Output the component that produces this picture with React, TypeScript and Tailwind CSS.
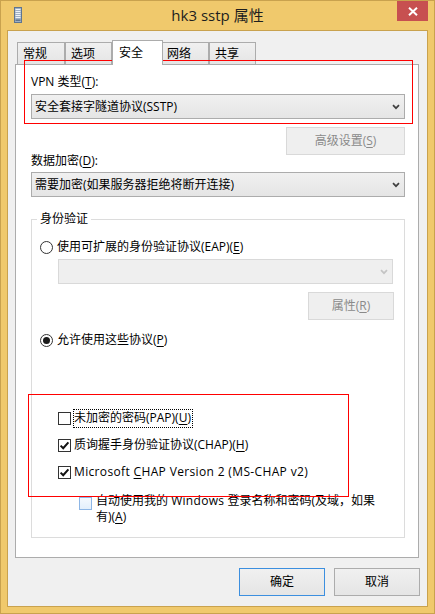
import React from "react";

function Chevron({ color }: { color: string }) {
  return (
    <svg width="8" height="6" viewBox="0 0 8 6">
      <path d="M1 1.2 L4 4.2 L7 1.2" fill="none" stroke={color} strokeWidth="1.7" />
    </svg>
  );
}

function Select({ text, disabled }: { text?: string; disabled?: boolean }) {
  return (
    <div
      className={
        disabled
          ? "h-[25px] border border-[#d9d9d9] bg-[#efefef] flex items-center justify-between pl-[3px] pr-[4px]"
          : "h-[25px] border border-[#acacac] bg-gradient-to-b from-[#f0f0f0] to-[#e5e5e5] flex items-center justify-between pl-[3px] pr-[4px]"
      }
    >
      <span className="leading-[16px]">{text}</span>
      <Chevron color={disabled ? "#c4c4c4" : "#404040"} />
    </div>
  );
}

function Radio({ checked }: { checked?: boolean }) {
  return (
    <span className="w-[13px] h-[13px] rounded-full border border-[#333333] bg-white flex items-center justify-center shrink-0">
      {checked ? <span className="w-[7px] h-[7px] rounded-full bg-[#1a1a1a]" /> : null}
    </span>
  );
}

function Check({ checked, hover }: { checked?: boolean; hover?: boolean }) {
  return (
    <span
      className={
        hover
          ? "w-[13px] h-[13px] border border-[#8db6e6] bg-gradient-to-b from-[#f4f9fe] to-[#e3effc] flex items-center justify-center shrink-0"
          : "w-[13px] h-[13px] border border-[#333333] bg-white flex items-center justify-center shrink-0"
      }
    >
      {checked ? (
        <svg width="11" height="11" viewBox="0 0 11 11">
          <path d="M1.6 5.6 L4.2 8.2 L9.4 2.4" fill="none" stroke="#111111" strokeWidth="2" />
        </svg>
      ) : null}
    </span>
  );
}

export default function App() {
  return (
    <div className="relative w-[435px] h-[614px] bg-[#f0c96c] border border-[#c9a24e] px-[6px] pb-[6px] flex flex-col font-[family-name:'Open_Sans','Noto_Sans_CJK_SC',sans-serif] text-[12px] text-black">
      {/* title bar */}
      <div className="h-[29px] grid grid-cols-[1fr_auto_1fr] items-start">
        <div className="pl-[7px] pt-[6px]">
          <svg width="8" height="16" viewBox="0 0 8 16">
            <rect x="0.5" y="0.5" width="7" height="15" fill="#9fb0c4" stroke="#5f7590" />
            <rect x="1.5" y="2" width="5" height="1" fill="#eef3f8" />
            <rect x="1.5" y="4" width="5" height="1" fill="#eef3f8" />
            <rect x="1.5" y="6" width="5" height="1" fill="#eef3f8" />
            <rect x="1.5" y="8" width="5" height="1" fill="#eef3f8" />
            <rect x="1.5" y="10" width="5" height="1" fill="#eef3f8" />
            <rect x="1.5" y="12.5" width="5" height="1.5" fill="#5f7590" />
          </svg>
        </div>
        <div className="text-[15px] leading-[29px] text-[#1e1e1e]">hk3 sstp 属性</div>
        <div className="flex justify-end">
          <div className="w-[31px] h-[20px] bg-[#c75050] flex items-center justify-center">
            <svg width="10" height="9" viewBox="0 0 10 9">
              <path d="M1 0.8 L9 8.2 M9 0.8 L1 8.2" stroke="#ffffff" strokeWidth="2" />
            </svg>
          </div>
        </div>
      </div>

      {/* client area */}
      <div className="h-[577px] border border-[#c9a24e] bg-[#f0f0f0] flex flex-col">
        {/* tabs */}
        <div className="mt-[9px] ml-[9px] h-[24px] flex items-end">
          <div className="w-[48px] h-[22px] border-t border-l border-r border-[#acacac] bg-gradient-to-b from-[#f0f0f0] to-[#e5e5e5] flex items-center pl-[5px]">常规</div>
          <div className="w-[47px] h-[22px] border-t border-l border-r border-[#acacac] bg-gradient-to-b from-[#f0f0f0] to-[#e5e5e5] flex items-center pl-[5px]">选项</div>
          <div className="relative z-10 -mb-px w-[51px] h-[25px] border-t border-l border-r border-[#acacac] bg-white flex items-center pl-[6px] pb-[1px]">安全</div>
          <div className="w-[46px] h-[22px] border-t border-r border-[#acacac] bg-gradient-to-b from-[#f0f0f0] to-[#e5e5e5] flex items-center pl-[4px]">网络</div>
          <div className="w-[47px] h-[22px] border-t border-l border-r border-[#acacac] bg-gradient-to-b from-[#f0f0f0] to-[#e5e5e5] flex items-center pl-[5px]">共享</div>
        </div>

        {/* panel */}
        <div className="ml-[7px] mr-[8px] h-[494px] border border-[#acacac] bg-white pl-[15px] pr-[13px] flex flex-col">
          <div className="mt-[9px] h-[16px] leading-[16px]">
            VPN 类型(<u className="underline-offset-2">T</u>):
          </div>
          <div className="mt-[4px]">
            <Select text="安全套接字隧道协议(SSTP)" />
          </div>
          <div className="mt-[8px] flex justify-end">
            <div className="w-[119px] h-[28px] border border-[#d9d9d9] bg-[#efefef] text-[#8a8a8a] flex items-center justify-center">
              高级设置(<u className="underline-offset-2">S</u>)
            </div>
          </div>
          <div className="-mt-[2px] h-[16px] leading-[16px]">
            数据加密(<u className="underline-offset-2">D</u>):
          </div>
          <div className="mt-[3px]">
            <Select text="需要加密(如果服务器拒绝将断开连接)" />
          </div>

          {/* group box */}
          <div className="relative mt-[22px] h-[319px] border border-[#dcdcdc] flex flex-col">
            <span className="absolute left-[5px] -top-[9px] bg-white px-[3px] leading-[16px]">身份验证</span>
            <div className="mt-[19px] ml-[8px] h-[16px] flex items-center gap-[4px]">
              <Radio />
              <span className="leading-[16px]">
                使用可扩展的身份验证协议(EAP)(<u className="underline-offset-2">E</u>)
              </span>
            </div>
            <div className="mt-[4px] ml-[26px] mr-[11px]">
              <Select disabled />
            </div>
            <div className="mt-[8px] mr-[10px] flex justify-end">
              <div className="w-[86px] h-[28px] border border-[#d9d9d9] bg-[#efefef] text-[#8a8a8a] flex items-center justify-center">
                属性(<u className="underline-offset-2">R</u>)
              </div>
            </div>
            <div className="mt-[12px] ml-[8px] h-[16px] flex items-center gap-[4px]">
              <Radio checked />
              <span className="leading-[16px]">
                允许使用这些协议(<u className="underline-offset-2">P</u>)
              </span>
            </div>

            <div className="mt-[62px] ml-[26px] h-[16px] flex items-center gap-[2px]">
              <Check />
              <span className="h-[19px] border border-dotted border-black flex items-center pr-[1px] leading-[16px]">
                未加密的密码(PAP)(<u className="underline-offset-2">U</u>)
              </span>
            </div>
            <div className="mt-[11px] ml-[26px] h-[16px] flex items-center gap-[3px]">
              <Check checked />
              <span className="leading-[16px]">
                质询握手身份验证协议(CHAP)(<u className="underline-offset-2">H</u>)
              </span>
            </div>
            <div className="mt-[11px] ml-[26px] h-[16px] flex items-center gap-[3px]">
              <Check checked />
              <span className="leading-[16px] tracking-[0.35px]">
                Microsoft <u className="underline-offset-2">C</u>HAP Version 2 (MS-CHAP v2)
              </span>
            </div>
            <div className="mt-[13px] ml-[47px] flex items-start gap-[4px]">
              <span className="mt-[4px]">
                <Check hover />
              </span>
              <span className="leading-[16px]">
                自动使用我的 <span className="tracking-[0.3px]">Windows</span> 登录名称和密码(及域，如果
                <br />
                有)(<u className="underline-offset-2">A</u>)
              </span>
            </div>
          </div>
        </div>

        {/* bottom buttons */}
        <div className="mt-[10px] mr-[7px] flex justify-end gap-[9px]">
          <div className="w-[86px] h-[28px] border border-[#3c8fdf] bg-gradient-to-b from-[#f0f0f0] to-[#e5e5e5] flex items-center justify-center">
            确定
          </div>
          <div className="w-[86px] h-[28px] border border-[#acacac] bg-gradient-to-b from-[#f0f0f0] to-[#e5e5e5] flex items-center justify-center">
            取消
          </div>
        </div>
      </div>

      {/* annotation boxes */}
      <div className="absolute left-[23px] top-[59px] w-[389px] h-[64px] border border-[#ff0000] pointer-events-none" />
      <div className="absolute left-[27px] top-[393px] w-[321px] h-[103px] border border-[#ff0000] pointer-events-none" />
    </div>
  );
}
